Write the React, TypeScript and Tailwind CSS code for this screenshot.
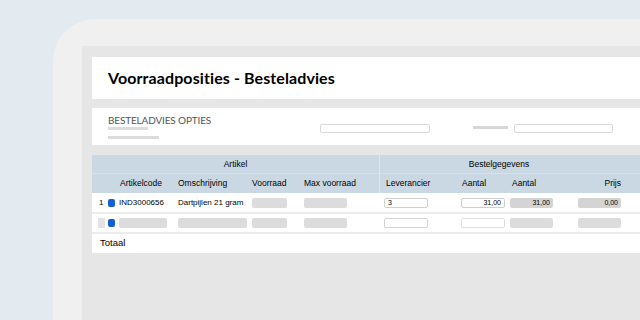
import React from "react";

const cols =
  "grid grid-cols-[16px_11px_59px_74px_52px_75px_82px_49px_68px_43px_1fr] items-center";

function Bar({ w }: { w: string }) {
  return <div className={`h-[10px] rounded-[2px] bg-[#dcdcdc] ${w}`} />;
}

export default function App() {
  return (
    <div className="w-[640px] h-[320px] overflow-hidden bg-[#e3eaf0] pl-[53px] pt-[19px] font-['Liberation_Sans',sans-serif]">
      {/* device frame */}
      <div className="h-[320px] w-[700px] rounded-tl-[42px] bg-[#f0f0f0] pl-[29px] pt-[27px]">
        {/* screen */}
        <div className="h-full bg-[#e6e6e6] pl-[10px] pt-[11px] flex flex-col">
          {/* title card */}
          <div className="h-[42px] bg-white flex items-center pl-[16px]">
            <h1 className="font-['Lato',sans-serif] font-bold text-[16px] tracking-[0.1px] text-black">
              Voorraadposities - Besteladvies
            </h1>
          </div>

          {/* options card */}
          <div className="mt-[9px] h-[37px] bg-white flex">
            <div className="w-[228px] pl-[16px] pt-[6px]">
              <div className="font-['Lato',sans-serif] text-[10px] leading-[12px] tracking-[-0.15px] text-[#555]">
                BESTELADVIES OPTIES
              </div>
              <div className="mt-[1px] h-[3px] w-[40px] bg-[#dcdcdc]" />
              <div className="mt-[6px] h-[3px] w-[51px] bg-[#dcdcdc]" />
            </div>
            <div className="mt-[16px] h-[9px] w-[110px] rounded-[2px] border border-[#d8d8d8]" />
            <div className="mt-[18px] ml-[43px] h-[3px] w-[35px] bg-[#d6d6d6]" />
            <div className="mt-[16px] ml-[6px] h-[9px] w-[99px] rounded-[2px] border border-[#d8d8d8]" />
          </div>

          {/* table */}
          <div className="mt-[10px] w-[560px] text-[8px] text-black">
            <div className="flex h-[19px] bg-[#c9d8e2] border-b border-[#d6e2ea] text-[8.5px]">
              <div className="w-[287px] flex items-center justify-center">Artikel</div>
              <div className="w-[239px] flex items-center justify-center border-l border-[#dde7ee]">
                Bestelgegevens
              </div>
            </div>
            <div className={`${cols} h-[19px] bg-[#c9d8e2] text-[8.5px]`}>
              <div />
              <div />
              <div className="pl-[1px]">Artikelcode</div>
              <div>Omschrijving</div>
              <div>Voorraad</div>
              <div>Max voorraad</div>
              <div className="h-full flex items-center pl-[6px] border-l border-[#dde7ee]">Leverancier</div>
              <div className="pl-[1px]">Aantal</div>
              <div className="pl-[2px]">Aantal</div>
              <div className="text-right">Prijs</div>
              <div />
            </div>

            {/* row 1 */}
            <div className={`${cols} h-[21px] bg-white border-b-2 border-[#ececec]`}>
              <div className="pl-[7px]">1</div>
              <div className="h-[8px] w-[7px] rounded-[2px] bg-[#1460d8]" />
              <div>IND3000656</div>
              <div className="whitespace-nowrap">Dartpijlen 21 gram</div>
              <Bar w="w-[35px]" />
              <Bar w="w-[43px]" />
              <div className="pl-[5px]">
                <div className="h-[10px] w-[44px] rounded-[2px] border border-[#cfcfcf] pl-[3px] text-[7px] leading-[8px]">
                  3
                </div>
              </div>
              <div className="h-[10px] w-[44px] rounded-[2px] border border-[#cfcfcf] pr-[3px] text-right text-[7px] leading-[8px]">
                31,00
              </div>
              <div className="h-[10px] w-[43px] rounded-[2px] bg-[#d4d4d4] pr-[3px] text-right text-[7px] leading-[10px]">
                31,00
              </div>
              <div className="h-[10px] w-[43px] rounded-[2px] bg-[#d4d4d4] pr-[3px] text-right text-[7px] leading-[10px]">
                0,00
              </div>
              <div />
            </div>

            {/* row 2 */}
            <div className={`${cols} h-[20px] bg-white border-b-2 border-[#ececec]`}>
              <div className="pl-[6px]">
                <div className="h-[10px] w-[7px] bg-[#e2e2e2]" />
              </div>
              <div className="h-[8px] w-[7px] rounded-[2px] bg-[#1460d8]" />
              <Bar w="w-[48px]" />
              <Bar w="w-[69px]" />
              <Bar w="w-[35px]" />
              <Bar w="w-[43px]" />
              <div className="pl-[5px]">
                <div className="h-[10px] w-[44px] rounded-[2px] border border-[#d4d4d4]" />
              </div>
              <div className="h-[10px] w-[44px] rounded-[2px] border border-[#e0e0e0]" />
              <Bar w="w-[43px]" />
              <Bar w="w-[43px]" />
              <div />
            </div>

            {/* total */}
            <div className="h-[19px] bg-white flex items-center pl-[8px] text-[9.5px]">Totaal</div>
          </div>
        </div>
      </div>
    </div>
  );
}
